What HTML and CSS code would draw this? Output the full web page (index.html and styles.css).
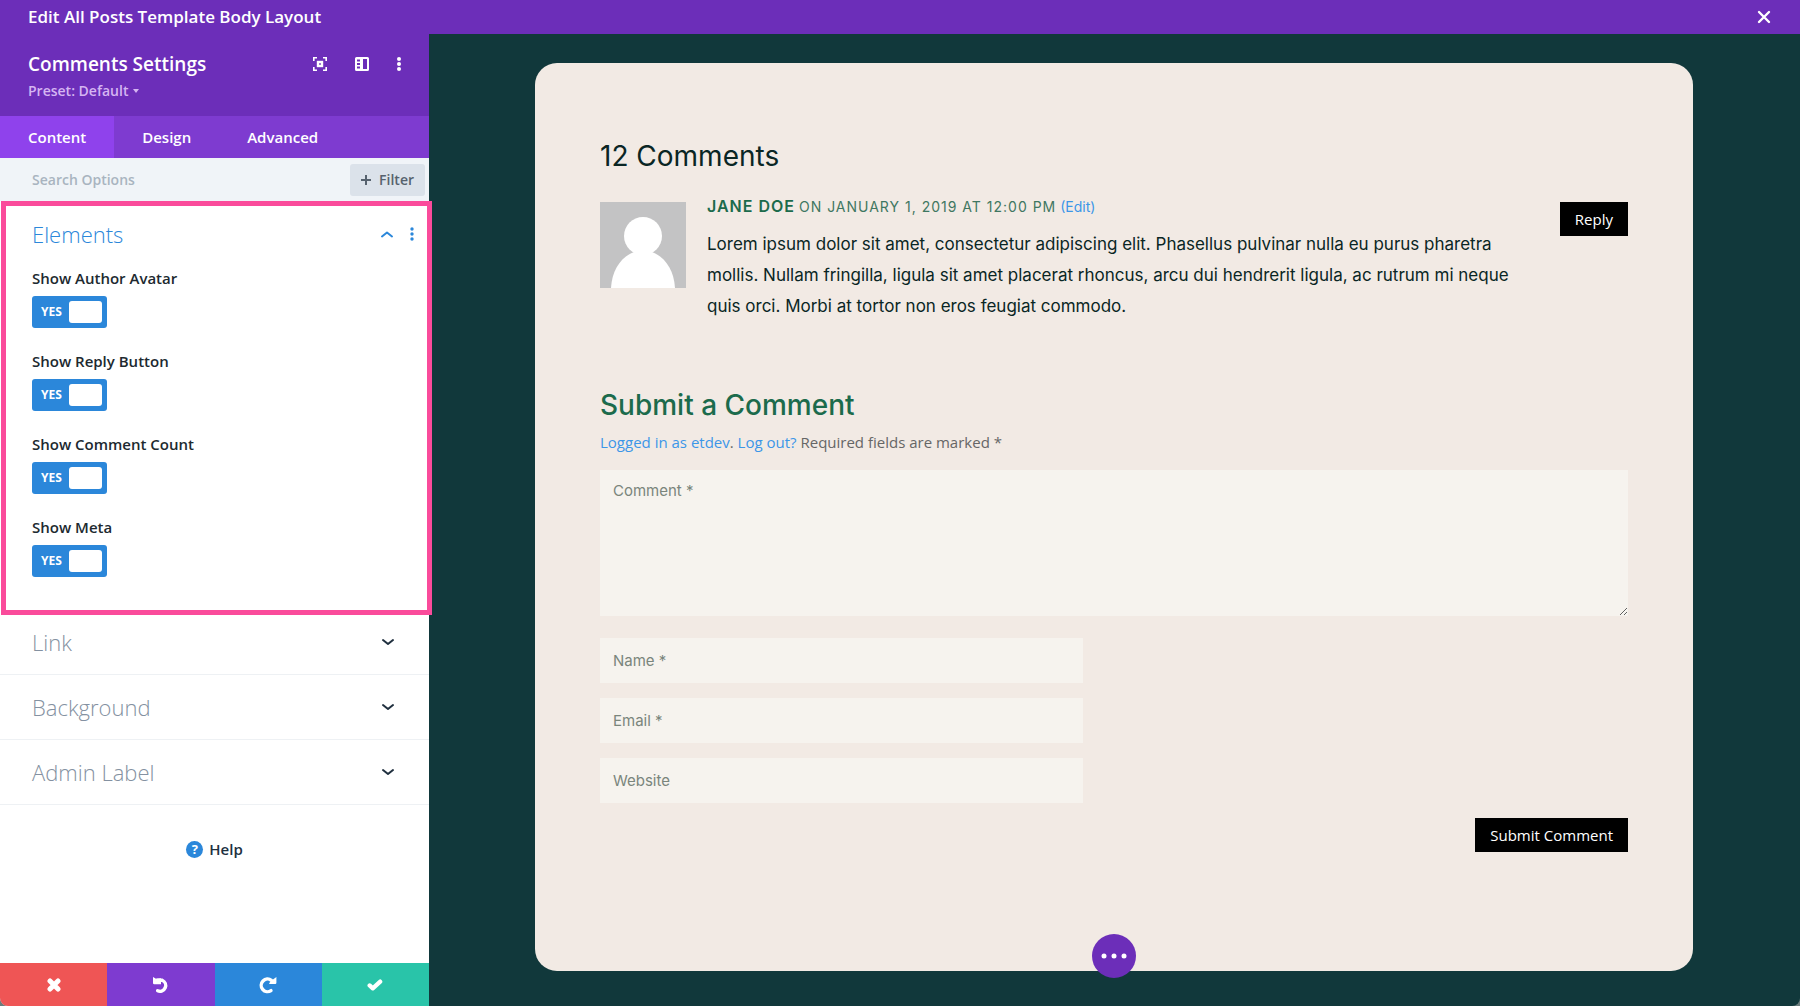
FILE: index.html
```html
<!DOCTYPE html>
<html lang="en">
<head>
<meta charset="utf-8">
<meta name="viewport" content="width=device-width, initial-scale=1">
<title>Edit All Posts Template Body Layout</title>
<link rel="stylesheet" href="styles.css">
</head>
<body>
<div class="app">
  <header class="topbar">
    <h1 class="topbar-title">Edit All Posts Template Body Layout</h1>
    <button class="icon-button" type="button" aria-label="Close">
      <svg width="14" height="14" viewBox="0 0 14 14" fill="none" stroke="currentColor" stroke-width="2.4" stroke-linecap="round"><path d="M2 2l10 10M12 2L2 12"/></svg>
    </button>
  </header>

  <div class="workspace">
    <aside class="panel">
      <div class="panel-header">
        <div class="panel-heading">
          <h2 class="panel-title">Comments Settings</h2>
          <div class="panel-tools">
            <button class="icon-button" type="button" aria-label="Focus module">
              <svg width="14" height="14" viewBox="0 0 14 14" fill="none" stroke="currentColor"><path stroke-width="1.6" d="M.8 4V.8H4M10 .8h3.2V4M13.2 10v3.2H10M4 13.2H.8V10"/><rect x="5" y="5" width="4" height="4" stroke-width="2.4"/></svg>
            </button>
            <button class="icon-button" type="button" aria-label="Dock panel">
              <svg width="14" height="14" viewBox="0 0 14 14" fill="currentColor"><path fill-rule="evenodd" d="M1.500 0h11A1.500 1.500 0 0 1 14 1.500v11a1.500 1.500 0 0 1-1.500 1.500h-11A1.500 1.500 0 0 1 0 12.500v-11A1.500 1.500 0 0 1 1.500 0zM8 2v10h4V2zM2 2.500v2h3v-2zM2 6v2h3V6zM2 9.500v2h3v-2z"/></svg>
            </button>
            <button class="icon-button" type="button" aria-label="More settings">
              <svg width="4" height="14" viewBox="0 0 4 14" fill="currentColor"><circle cx="2" cy="2" r="2"/><circle cx="2" cy="7" r="2"/><circle cx="2" cy="12" r="2"/></svg>
            </button>
          </div>
        </div>
        <button class="preset" type="button">Preset: Default
          <svg width="6" height="4" viewBox="0 0 6 4" fill="currentColor"><path d="M0 0h6L3 4z"/></svg>
        </button>
      </div>

      <nav class="tabs">
        <button class="tab tab-active" type="button">Content</button>
        <button class="tab" type="button">Design</button>
        <button class="tab" type="button">Advanced</button>
      </nav>

      <div class="search">
        <input class="search-input" type="search" placeholder="Search Options" aria-label="Search Options">
        <button class="filter" type="button">
          <svg width="10" height="10" viewBox="0 0 10 10" stroke="currentColor" stroke-width="2"><path d="M5 0v10M0 5h10"/></svg>Filter
        </button>
      </div>

      <section class="elements">
        <div class="elements-header">
          <h3 class="elements-title">Elements</h3>
          <button class="icon-button" type="button" aria-label="Collapse Elements">
            <svg width="14" height="8" viewBox="0 0 14 8" fill="none" stroke="currentColor" stroke-width="2" stroke-linecap="round" stroke-linejoin="round"><path d="M2 6.500l5-4 5 4"/></svg>
          </button>
          <button class="icon-button" type="button" aria-label="Elements options">
            <svg width="4" height="14" viewBox="0 0 4 14" fill="currentColor"><circle cx="2" cy="2" r="1.700"/><circle cx="2" cy="7" r="1.700"/><circle cx="2" cy="12" r="1.700"/></svg>
          </button>
        </div>
        <div class="option">
          <label class="option-label" for="show-avatar">Show Author Avatar</label>
          <span class="toggle">YES<input class="toggle-knob" id="show-avatar" type="checkbox" checked></span>
        </div>
        <div class="option">
          <label class="option-label" for="show-reply">Show Reply Button</label>
          <span class="toggle">YES<input class="toggle-knob" id="show-reply" type="checkbox" checked></span>
        </div>
        <div class="option">
          <label class="option-label" for="show-count">Show Comment Count</label>
          <span class="toggle">YES<input class="toggle-knob" id="show-count" type="checkbox" checked></span>
        </div>
        <div class="option">
          <label class="option-label" for="show-meta">Show Meta</label>
          <span class="toggle">YES<input class="toggle-knob" id="show-meta" type="checkbox" checked></span>
        </div>
      </section>

      <button class="section-row" type="button">Link
        <svg width="14" height="8" viewBox="0 0 14 8" fill="none" stroke="currentColor" stroke-width="2" stroke-linecap="round" stroke-linejoin="round"><path d="M2 2l5 4 5-4"/></svg>
      </button>
      <button class="section-row" type="button">Background
        <svg width="14" height="8" viewBox="0 0 14 8" fill="none" stroke="currentColor" stroke-width="2" stroke-linecap="round" stroke-linejoin="round"><path d="M2 2l5 4 5-4"/></svg>
      </button>
      <button class="section-row" type="button">Admin Label
        <svg width="14" height="8" viewBox="0 0 14 8" fill="none" stroke="currentColor" stroke-width="2" stroke-linecap="round" stroke-linejoin="round"><path d="M2 2l5 4 5-4"/></svg>
      </button>

      <a class="help" href="#help"><span class="help-icon" aria-hidden="true">?</span>Help</a>

      <footer class="actions">
        <button class="action action-discard" type="button" aria-label="Discard">
          <svg width="14" height="14" viewBox="0 0 14 14" fill="none" stroke="currentColor" stroke-width="5" stroke-linecap="round"><path d="M3 3l8 8M11 3l-8 8"/></svg>
        </button>
        <button class="action action-undo" type="button" aria-label="Undo">
          <svg width="18" height="18" viewBox="0 0 18 18" fill="none" stroke="currentColor"><path stroke-width="3.400" stroke-linecap="round" d="M5 4.200h5.200a5.300 5.300 0 1 1-4.600 10.600"/><path fill="currentColor" stroke="none" d="M1 1l3 1.800 5-.6v6H2.200A1.200 1.200 0 0 1 1 7z"/></svg>
        </button>
        <button class="action action-redo" type="button" aria-label="Redo">
          <svg width="18" height="18" viewBox="0 0 18 18" fill="none" stroke="currentColor"><path stroke-width="3.400" stroke-linecap="round" d="M12.400 4.400A6.300 6.300 0 1 0 12 14.600"/><path fill="currentColor" stroke="none" d="M17.400 1v5.800A1.200 1.200 0 0 1 16.200 8H10l1-2 2.600-2.200z"/></svg>
        </button>
        <button class="action action-save" type="button" aria-label="Save">
          <svg width="16" height="12" viewBox="0 0 16 12" fill="none" stroke="currentColor" stroke-width="4.200" stroke-linecap="round" stroke-linejoin="round"><path d="M2.600 6.400l3.200 3L13.200 2.600"/></svg>
        </button>
      </footer>
    </aside>

    <main class="canvas">
      <article class="card">
        <h2 class="heading">12 Comments</h2>

        <div class="comment">
          <svg class="avatar" viewBox="0 0 86 86" aria-hidden="true"><rect width="86" height="86" fill="#c3c3c4"/><ellipse cx="43" cy="34" rx="19" ry="19" fill="#fff"/><path fill="#fff" d="M11 86c1-18 10-31 23-36h18c13 5 22 18 23 36z"/></svg>
          <div class="comment-body">
            <p class="meta"><strong class="author">Jane Doe</strong> <span class="date">on January 1, 2019 at 12:00 PM</span> <a class="link edit" href="#edit">(Edit)</a></p>
            <p class="comment-text">Lorem ipsum dolor sit amet, consectetur adipiscing elit. Phasellus pulvinar nulla eu purus pharetra mollis. Nullam fringilla, ligula sit amet placerat rhoncus, arcu dui hendrerit ligula, ac rutrum mi neque quis orci. Morbi at tortor non eros feugiat commodo.</p>
          </div>
          <button class="black-button reply" type="button">Reply</button>
        </div>

        <h2 class="heading heading-green">Submit a Comment</h2>
        <p class="notice"><a class="link" href="#profile">Logged in as etdev</a>. <a class="link" href="#logout">Log out?</a> Required fields are marked *</p>
        <form class="form">
          <textarea class="field field-comment" placeholder="Comment *" aria-label="Comment"></textarea>
          <input class="field field-line" type="text" placeholder="Name *" aria-label="Name">
          <input class="field field-line" type="email" placeholder="Email *" aria-label="Email">
          <input class="field field-line" type="url" placeholder="Website" aria-label="Website">
          <button class="black-button submit" type="button">Submit Comment</button>
        </form>

        <button class="fab" type="button" aria-label="Page options">
          <svg width="26" height="6" viewBox="0 0 26 6" fill="currentColor"><circle cx="3" cy="3" r="2.500"/><circle cx="13" cy="3" r="2.500"/><circle cx="23" cy="3" r="2.500"/></svg>
        </button>
      </article>
    </main>
  </div>
</div>
</body>
</html>
```
FILE: styles.css
```css
:root {
  --ui: "Open Sans", sans-serif;
  --content: "Inter", sans-serif;
  --purple: #6c2eb9;
  --purple-mid: #7e3bd0;
  --purple-light: #8f42ec;
  --blue: #2b87da;
  --green: #1c6b4c;
}

*, *::before, *::after { box-sizing: border-box; }

body {
  margin: 0;
  background: #6b7d7d;
  font: 15px/20px var(--ui);
  color: #20292f;
}

h1, h2, h3, p { margin: 0; }

button, input, textarea {
  margin: 0;
  padding: 0;
  border: 0;
  background: none;
  font: inherit;
  color: inherit;
}

button { cursor: pointer; }
svg { display: block; flex: none; }
a { text-decoration: none; }

.app {
  display: flex;
  flex-direction: column;
  min-height: 100vh;
  border-radius: 0 0 8px 8px;
  overflow: hidden;
  background: #11383b;
}

.topbar {
  display: flex;
  align-items: center;
  justify-content: space-between;
  height: 34px;
  padding: 0 29px 0 28px;
  background: var(--purple);
  color: #fff;
}

.topbar-title { font-size: 17px; line-height: 24px; font-weight: 600; }
.icon-button { display: flex; align-items: center; justify-content: center; }

.workspace { display: flex; flex: 1; }

/* Settings panel */
.panel {
  display: flex;
  flex-direction: column;
  flex: none;
  width: 429px;
  background: #fff;
}

.panel-header {
  height: 82px;
  padding: 17px 28px 0;
  background: var(--purple);
  color: #fff;
}

.panel-heading { display: flex; align-items: center; justify-content: space-between; }
.panel-title { font-size: 19px; line-height: 26px; font-weight: 600; }
.panel-tools { display: flex; align-items: center; gap: 28px; }

.preset {
  display: flex;
  align-items: center;
  gap: 5px;
  margin-top: 4px;
  font-size: 14px;
  line-height: 20px;
  font-weight: 600;
  color: #d5b5f2;
}

.tabs { display: flex; height: 42px; background: var(--purple-mid); }
.tab { padding: 0 28px; font-weight: 600; color: #fff; }
.tab-active { background: var(--purple-light); }

.search {
  display: flex;
  align-items: center;
  height: 43px;
  padding: 0 4px 0 32px;
  background: #f0f4f8;
  font-size: 14px;
  font-weight: 600;
}

.search-input { flex: 1; min-width: 0; outline: 0; }
.search-input::placeholder { color: #a9b4c0; }

.filter {
  display: flex;
  align-items: center;
  gap: 8px;
  height: 32px;
  padding: 0 11px;
  border-radius: 3px;
  background: #dbe2ea;
  color: #56626e;
}

.elements {
  position: relative;
  display: flex;
  flex-direction: column;
  gap: 23px;
  padding: 18px 15px 33px 32px;
}

/* Highlight frame drawn over the neighbouring rows */
.elements::after {
  content: "";
  position: absolute;
  inset: 0 -3px -5px 1px;
  border: 5px solid #fa4b9b;
  pointer-events: none;
}

.elements-header {
  display: flex;
  align-items: center;
  gap: 16px;
  height: 30px;
  margin-bottom: -4px;
  color: var(--blue);
}

.elements-title { flex: 1; font-size: 22px; line-height: 30px; font-weight: 300; }

.option { display: flex; flex-direction: column; align-items: flex-start; gap: 8px; }
.option-label { font-weight: 600; }

.toggle {
  display: flex;
  align-items: center;
  justify-content: space-between;
  width: 75px;
  height: 32px;
  padding: 0 5px 0 9px;
  border-radius: 3px;
  background: var(--blue);
  color: #fff;
  font-size: 12px;
  font-weight: 700;
}

.toggle-knob {
  appearance: none;
  width: 33px;
  height: 22px;
  border-radius: 3px;
  background: #fff;
}

.section-row {
  display: flex;
  align-items: center;
  justify-content: space-between;
  height: 65px;
  padding: 0 34px 0 32px;
  border-bottom: 1px solid #eef1f4;
  font-size: 22px;
  line-height: 30px;
  font-weight: 300;
  color: #8491a1;
}

.section-row svg { color: #20303f; }

.help {
  display: flex;
  align-items: center;
  justify-content: center;
  gap: 6px;
  margin: 34px 0;
  font-weight: 600;
  color: #20303f;
}

.help-icon {
  width: 17px;
  border-radius: 50%;
  background: var(--blue);
  color: #fff;
  font-size: 13px;
  line-height: 17px;
  font-weight: 700;
  text-align: center;
}

.actions { display: flex; height: 43px; margin-top: auto; color: #fff; }
.action { display: flex; flex: 1; align-items: center; justify-content: center; }
.action-discard { background: #ef5555; }
.action-undo { background: var(--purple-mid); }
.action-redo { background: var(--blue); }
.action-save { background: #29c4a9; }

/* Page preview */
.canvas { flex: 1; min-width: 0; padding: 29px 107px 34px 106px; }

.card {
  position: relative;
  padding: 76px 65px 119px;
  border-radius: 22px;
  background: #f2eae4;
  font-family: var(--content);
}

.heading { font-size: 28px; line-height: 34px; font-weight: 400; color: #0a2624; }
.heading-green { font-weight: 500; color: var(--green); }

.comment { display: flex; align-items: flex-start; margin: 18px 0 66px; }
.avatar { width: 86px; height: 86px; margin: 11px 21px 0 0; }
.comment-body { flex: 1; min-width: 0; padding-right: 40px; }
.meta { font-size: 14px; line-height: 30px; }
.author, .date { letter-spacing: 1px; text-transform: uppercase; color: var(--green); }
.author { font-size: 16px; font-weight: 600; }
.date { color: #3f7761; }
.link { color: #3c96e8; }
.comment-text { margin-top: 7px; font-size: 17px; line-height: 31px; color: #0a2624; }

.black-button {
  height: 34px;
  padding: 0 15px;
  background: #000;
  color: #fff;
  font-family: var(--ui);
  font-size: 15px;
}

.reply { margin-top: 11px; }

.notice { margin-top: 8px; font: 15px/24px var(--ui); color: #666; }

.form {
  display: flex;
  flex-direction: column;
  align-items: flex-start;
  gap: 15px;
  margin-top: 16px;
}

.field {
  padding: 10px 13px;
  border-radius: 0;
  background: #f6f3ee;
  font-size: 15px;
  line-height: 22px;
  color: #0a2624;
}

.field::placeholder { color: #7a857c; opacity: 1; }
.field-comment { width: 100%; height: 146px; margin-bottom: 7px; resize: vertical; }
.field-line { width: 47%; height: 45px; }
.submit { align-self: flex-end; }

.fab {
  position: absolute;
  left: 50%;
  bottom: -7px;
  display: flex;
  align-items: center;
  justify-content: center;
  width: 44px;
  height: 44px;
  margin-left: -22px;
  border-radius: 50%;
  background: var(--purple);
  color: #fff;
}
```
